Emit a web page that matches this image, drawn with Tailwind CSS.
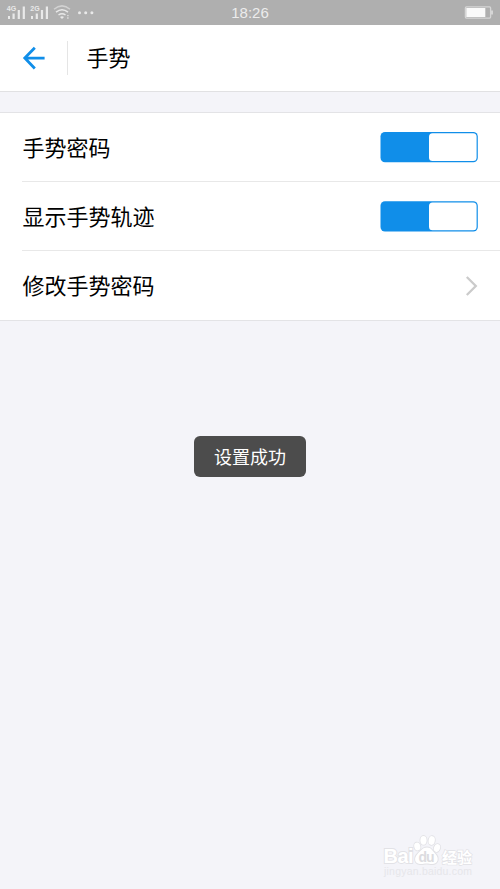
<!DOCTYPE html>
<html lang="zh-CN">
<head>
<meta charset="utf-8">
<title>手势</title>
<script src="https://cdn.jsdelivr.net/npm/@tailwindcss/browser@4"></script>
</head>
<body class="bg-[#f4f4f9] font-['Liberation_Sans','Noto_Sans_CJK_SC',sans-serif] text-black">
<div class="relative flex h-[889px] w-[500px] flex-col overflow-hidden">
  <div class="grid h-[25px] shrink-0 grid-cols-3 items-center bg-[#afafaf]">
    <svg class="h-[25px] w-[100px]" viewBox="0 0 100 25" fill="#e9e9e9">
      <text x="6.800" y="11.200" font-size="7" font-weight="bold" font-family="Liberation Sans" textLength="9.500">4G</text>
      <path d="M8 16h2v3H8zM12.500 13.500h2.200v5.500h-2.200zM17.700 10h2.200v9h-2.200zM22.700 6.500h2.200V19h-2.200z"/>
      <text x="30.300" y="11.200" font-size="7" font-weight="bold" font-family="Liberation Sans" textLength="9.500">2G</text>
      <path d="M31 16h2v3h-2zM35.700 13.500h2.200v5.500h-2.200zM40.900 10h2.200v9h-2.200zM45.800 6.500H48V19h-2.200z"/>
      <g fill="none" stroke="#e9e9e9" stroke-width="1.500">
        <path d="M54 9.200Q62 2.500 70 9.200" opacity=".6"/><path d="M56 12.200Q62 7.500 68 12.200M58.500 15Q62 12.500 65.500 15"/>
      </g>
      <path d="M60 16.900Q62 15.600 64 16.900L62 19z"/>
      <path d="M67 15h1.700v1.300H67zM67 17.200h1.700v1.500H67z" opacity=".7"/>
      <circle cx="79.500" cy="12.700" r="1.500"/><circle cx="85.700" cy="12.700" r="1.500"/><circle cx="91.900" cy="12.700" r="1.500"/>
    </svg>
    <span class="text-center text-[15px] leading-[25px] text-[#ececec]">18:26</span>
    <svg class="h-[25px] w-[36px] justify-self-end" viewBox="0 0 36 25">
      <rect x="1.400" y="6.900" width="25.200" height="11.200" rx="1" fill="none" stroke="#d6d6d6" stroke-width="1.300"/>
      <path d="M27 10.500h2v4h-2z" fill="#d6d6d6"/><path d="M2.300 8h19v9h-19z" fill="#fafafa"/>
    </svg>
  </div>
  <header class="flex h-[67px] shrink-0 items-center border-b border-[#e1e1e3] bg-white">
    <svg class="ml-[22px] h-6 w-6" viewBox="0 0 24 24" fill="none" stroke="#108ee9" stroke-width="2.800"><path d="M12.800 1.800 2.800 12.100l10 10.300M2.800 12.100h19.800"/></svg>
    <div class="ml-[20.500px] h-[34px] w-[1.500px] bg-[#e5e5e5]"></div>
    <h1 class="ml-[18.500px] pt-0.5 text-[22px] leading-[66px]">手势</h1>
  </header>
  <main class="mt-5 shrink-0 border-y border-[#e3e3e6] bg-white text-[22px]">
    <div class="flex h-[68px] items-center justify-between pl-[22.500px] pr-[22px]">
      <span class="pt-0.5">手势密码</span>
      <svg class="h-[31px] w-[98px]" viewBox="0 0 98 31"><rect x=".5" y="0" width="97.300" height="30.300" rx="4.500" fill="#108ee9"/><rect x="49" y="1.300" width="47.600" height="27.700" rx="3.500" fill="#fff"/></svg>
    </div>
    <div class="ml-[22px] h-px bg-[#e8e8e8]"></div>
    <div class="flex h-[68px] items-center justify-between pl-[22.500px] pr-[22px]">
      <span class="pt-[3px]">显示手势轨迹</span>
      <svg class="h-[31px] w-[98px]" viewBox="0 0 98 31"><rect x=".5" y=".3" width="97.300" height="30.300" rx="4.500" fill="#108ee9"/><rect x="49" y="1.600" width="47.600" height="27.700" rx="3.500" fill="#fff"/></svg>
    </div>
    <div class="ml-[22px] h-px bg-[#e8e8e8]"></div>
    <div class="flex h-[69px] items-center justify-between pl-[22.500px] pr-[22px]">
      <span class="pt-0.5">修改手势密码</span>
      <svg class="h-[22px] w-[13px]" viewBox="0 0 13 22" fill="none" stroke="#cbcbcb" stroke-width="2.300"><path d="M1.800 2 10.800 11l-9 9"/></svg>
    </div>
  </main>
  <div class="absolute left-[194px] top-[436px] flex h-[41px] w-[112px] items-center justify-center rounded-[6px] bg-[#4c4c4c] pt-[3px] text-[18px] text-white">设置成功</div>
  <svg class="absolute left-[370px] top-[825px]" width="130" height="64" viewBox="0 0 130 64" fill="#fff" stroke="#e2e2e6" stroke-width="1.800" paint-order="stroke" font-family="Liberation Sans, Noto Sans CJK SC, sans-serif">
    <text x="13.500" y="38" font-size="20" textLength="30"><tspan stroke="#e2e2e6" font-weight="bold">Bai</tspan></text>
    <ellipse cx="47.300" cy="21.500" rx="3" ry="4" transform="rotate(-15 47.300 21.500)"/>
    <ellipse cx="53.500" cy="15.300" rx="3.100" ry="4.400"/>
    <ellipse cx="61.700" cy="15.500" rx="3.100" ry="4.400" transform="rotate(10 61.700 15.500)"/>
    <ellipse cx="67" cy="23" rx="3" ry="4" transform="rotate(20 67 23)"/>
    <path d="M57 22.500c4.500 0 5.500 3.500 8.500 6.500 3.500 3.500 3 9.500-2.500 10-3 .2-4-.5-6.500-.5s-3.500.7-6.500.5c-6-.5-6-6.500-2.500-10 3-3 5-6.500 9.500-6.500z"/>
    <text x="48.500" y="36.500" font-size="14" font-weight="bold" fill="#dcdce0" stroke="none" textLength="16">du</text>
    <text x="72" y="37.500" font-size="15" font-weight="bold" textLength="30" stroke-width="1.300">经验</text>
    <text x="14" y="50" font-size="10.500" fill="#e6e6ea" stroke="none" textLength="88">jingyan.baidu.com</text>
  </svg>
</div>
</body>
</html>
